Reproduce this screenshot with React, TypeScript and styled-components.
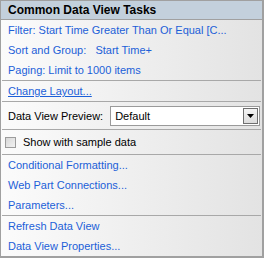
import React from 'react';
import styled, { createGlobalStyle } from 'styled-components';

const GlobalStyle = createGlobalStyle`
  html, body {
    margin: 0;
    padding: 0;
    background: #ffffff;
  }
  body {
    font-family: "Liberation Sans", Arial, sans-serif;
    font-size: 11px;
  }
`;

const Panel = styled.div`
  width: 264px;
  height: 258px;
  box-sizing: border-box;
  border: 1px solid #a0a0a0;
  border-right-width: 2px;
  border-bottom-width: 2px;
  display: flex;
  flex-direction: column;
  background: linear-gradient(to right, #fbfbfb, #e3e3e3);
`;

const Header = styled.div`
  height: 19px;
  display: flex;
  align-items: center;
  padding-left: 7px;
  background: #c3d0dc;
  border-bottom: 1px solid #a0a0a0;
  font-weight: bold;
  font-size: 12px;
  color: #000;
`;

const Body = styled.div`
  display: flex;
  flex-direction: column;
  padding: 0 1px;
`;

const Row = styled.div<{ $h?: number }>`
  height: ${(p) => p.$h ?? 20}px;
  display: flex;
  align-items: center;
  padding-left: 6px;
  white-space: nowrap;
  gap: 7px;
`;

const Link = styled.span<{ $underline?: boolean }>`
  color: #1c5fd8;
  text-decoration: ${(p) => (p.$underline ? 'underline' : 'none')};
  cursor: pointer;
`;

const Label = styled.span`
  color: #000;
`;

const Separator = styled.div`
  height: 1px;
  background: #a8a8a8;
`;

const Select = styled.div`
  margin-left: auto;
  margin-right: 1px;
  width: 151px;
  height: 20px;
  box-sizing: border-box;
  border: 1px solid #9a9a9a;
  background: #fff;
  display: flex;
  align-items: center;
  padding: 0 1px 0 4px;
`;

const SelectText = styled.span`
  flex: 1;
  color: #000;
`;

const DropButton = styled.div`
  width: 15px;
  height: 16px;
  box-sizing: border-box;
  border: 1px solid #6f6f6f;
  background: linear-gradient(#f4f4f4, #dcdcdc);
  display: flex;
  align-items: center;
  justify-content: center;
`;

const Checkbox = styled.div`
  width: 11px;
  height: 11px;
  box-sizing: border-box;
  border: 1px solid #9c9c9c;
  background: linear-gradient(135deg, #d8d8d8, #f2f2f2);
  margin-left: -3px;
`;

export default function App() {
  return (
    <>
      <GlobalStyle />
      <Panel>
        <Header>Common Data View Tasks</Header>
        <Body>
          <Row>
            <Link>Filter: Start Time Greater Than Or Equal [C...</Link>
          </Row>
          <Row>
            <Link>Sort and Group:&nbsp;&nbsp; Start Time+</Link>
          </Row>
          <Row>
            <Link>Paging: Limit to 1000 items</Link>
          </Row>
          <Separator />
          <Row>
            <Link $underline>Change Layout...</Link>
          </Row>
          <Separator />
          <Row $h={27}>
            <Label>Data View Preview:</Label>
            <Select>
              <SelectText>Default</SelectText>
              <DropButton>
                <svg width="7" height="4" viewBox="0 0 7 4">
                  <path d="M0 0H7L3.5 4Z" fill="#000" />
                </svg>
              </DropButton>
            </Select>
          </Row>
          <Separator />
          <Row $h={24}>
            <Checkbox />
            <Label>Show with sample data</Label>
          </Row>
          <Separator />
          <Row>
            <Link>Conditional Formatting...</Link>
          </Row>
          <Row>
            <Link>Web Part Connections...</Link>
          </Row>
          <Row>
            <Link>Parameters...</Link>
          </Row>
          <Separator />
          <Row>
            <Link>Refresh Data View</Link>
          </Row>
          <Row>
            <Link>Data View Properties...</Link>
          </Row>
        </Body>
      </Panel>
    </>
  );
}
